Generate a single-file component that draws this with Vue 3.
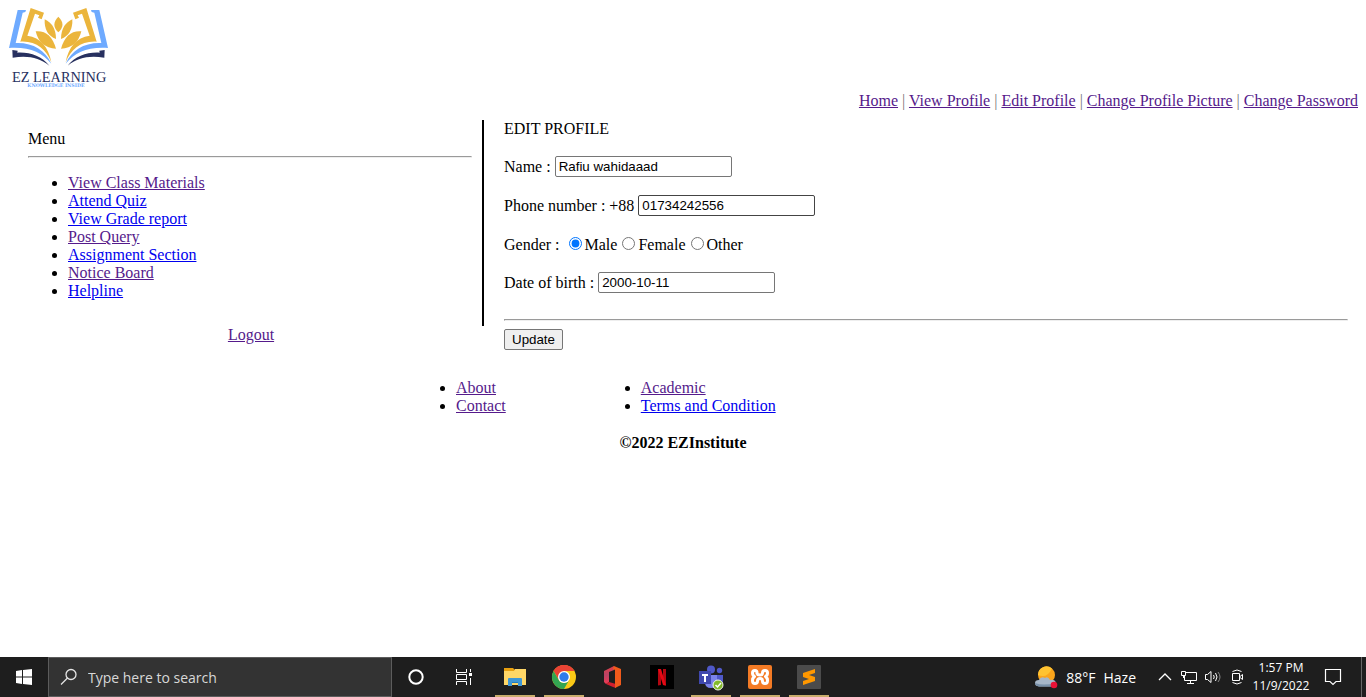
<script setup>
import { ref } from 'vue'

const topLinks = ['Home', 'View Profile', 'Edit Profile', 'Change Profile Picture', 'Change Password']
const menu = [
  { text: 'View Class Materials', seen: true },
  { text: 'Attend Quiz', seen: false },
  { text: 'View Grade report', seen: false },
  { text: 'Post Query', seen: true },
  { text: 'Assignment Section', seen: false },
  { text: 'Notice Board', seen: true },
  { text: 'Helpline', seen: false },
]
const name = ref('Rafiu wahidaaad')
const phone = ref('01734242556')
const gender = ref('Male')
const birth = ref('2000-10-11')
</script>

<template>
  <div class="screen">
    <div class="page">
      <header>
        <svg class="logo" viewBox="24 24 300 240" role="img" aria-label="EZ Learning, knowledge inside">
          <defs>
            <g id="book-half">
              <path fill="#6eaaff" d="M53 30H78L76 36L68 38L47 129C98 127 136 150 154 191C125 157 88 140 27 144Z" />
              <path fill="#27305f" d="M37 150L53 152L52 158C90 156 125 168 148 197C118 173 85 166 38 173Z" />
              <path fill="#ebb53c" d="M92 24L132 38L125 58L114 53L118 46L105 41L82 107C122 112 146 142 154 187C138 148 108 122 61 125Z" />
              <path fill="#ebb53c" d="M134 58Q168 74 168 117Q132 104 134 58Z" />
              <path fill="#ebb53c" d="M107 94Q152 90 168 146Q119 144 107 94Z" />
            </g>
          </defs>
          <use href="#book-half" />
          <use href="#book-half" transform="translate(351 0) scale(-1 1)" />
          <path fill="#ebb53c" d="M175 50Q200 74 175 97Q151 74 175 50Z" />
          <text class="logo-name" x="36" y="247">EZ LEARNING</text>
          <text class="logo-tag" x="82" y="261">KNOWLEDGE INSIDE</text>
        </svg>
        <nav class="top-nav">
          <template v-for="(link, i) in topLinks" :key="link">
            <span v-if="i" class="bar"> | </span><a href="#" class="seen">{{ link }}</a>
          </template>
        </nav>
      </header>

      <main class="columns">
        <aside>
          <nav class="menu">
            Menu
            <hr>
            <ul>
              <li v-for="item in menu" :key="item.text"><a href="#" :class="{ seen: item.seen }">{{ item.text }}</a></li>
            </ul>
          </nav>
          <div class="logout"><a href="#" class="seen">Logout</a></div>
        </aside>

        <form @submit.prevent>
          <div>EDIT PROFILE</div>
          <div class="field"><label for="name">Name :</label><input id="name" v-model="name" type="text"></div>
          <div class="field"><label for="phone">Phone number : +88</label><input id="phone" v-model="phone" class="dark" type="text"></div>
          <div class="genders" role="radiogroup" aria-label="Gender">Gender : <input id="male" v-model="gender" type="radio" value="Male"><label for="male">Male</label><input id="female" v-model="gender" type="radio" value="Female"><label for="female">Female</label><input id="other" v-model="gender" type="radio" value="Other"><label for="other">Other</label></div>
          <div class="field"><label for="birth">Date of birth :</label><input id="birth" v-model="birth" type="text"></div>
          <hr>
          <button class="update" type="submit">Update</button>
        </form>
      </main>

      <footer>
        <div class="foot-lists">
          <ul>
            <li><a href="#" class="seen">About</a></li>
            <li><a href="#" class="seen">Contact</a></li>
          </ul>
          <ul>
            <li><a href="#" class="seen">Academic</a></li>
            <li><a href="#">Terms and Condition</a></li>
          </ul>
        </div>
        <b class="copyright">©2022 EZInstitute</b>
      </footer>
    </div>

    <div class="taskbar">
      <button class="start" aria-label="Start">
        <svg viewBox="0 0 16 16" width="16" height="16" fill="#fff"><path d="M0 2L6 1V7.500H0ZM7 1L16 0V7.500H7ZM0 8.500H6V15L0 14ZM7 8.500H16V16L7 15Z" /></svg>
      </button>
      <label class="search">
        <svg viewBox="0 0 18 18" width="18" height="18" fill="none" stroke="#e6e6e6" stroke-width="1.300"><circle cx="11" cy="6.500" r="5" /><path d="M7.500 10L1 16.500" /></svg>
        <input type="text" placeholder="Type here to search" aria-label="Search">
      </label>
      <div class="apps">
        <button aria-label="Cortana">
          <svg viewBox="0 0 40 40"><circle cx="19" cy="20" r="6.700" fill="none" stroke="#fff" stroke-width="2" /></svg>
        </button>
        <button aria-label="Task view">
          <svg viewBox="0 0 40 40" fill="none" stroke="#fff"><path d="M10.500 12V15.500H20.500V12M10.500 28V24.500H20.500V28M10.500 17.500H20.500V22.500H10.500ZM24.500 12V15M24.500 21V28" /><path fill="#fff" stroke="none" d="M23 16H26V19H23Z" /></svg>
        </button>
        <button class="open" aria-label="File Explorer">
          <svg viewBox="0 0 40 40"><path fill="#e8a010" d="M9 11H18L20 13V17H9Z" /><path fill="#ffd767" d="M9 14H19L20 12H31V28H9Z" /><path fill="#3f97d5" d="M13 29V22Q13 21 14 21H26Q27 21 27 22V29H23V25H17V29Z" /><path fill="#247cba" d="M17 25H23V26H17Z" /></svg>
        </button>
        <button class="open" aria-label="Chrome">
          <svg viewBox="0 0 40 40"><circle cx="20" cy="20" r="12" fill="#fbc916" /><path fill="#e94335" d="M20 20L9.600 14A12 12 0 0 1 30.400 14H20Z" /><path fill="#e94335" d="M20 14H30.400A12 12 0 0 0 9.600 14L15 23Z" /><path fill="#33a552" d="M9.600 14A12 12 0 0 0 20 32L25.200 23A6 6 0 0 1 14.800 23Z" /><circle cx="20" cy="20" r="6" fill="#fff" /><circle cx="20" cy="20" r="4.700" fill="#2f7bea" /></svg>
        </button>
        <button aria-label="Office">
          <svg viewBox="0 0 40 40"><defs><linearGradient id="office-l" x2="0" y2="1"><stop stop-color="#e13d45" /><stop offset=".5" stop-color="#b84467" /><stop offset="1" stop-color="#f13952" /></linearGradient></defs><path fill="url(#office-l)" d="M11 14L21 9V13L16 15V25L13 27L11 25Z" /><path fill="#d31e2e" d="M13 27L16 25L23 27V31L20 30Z" /><path fill="#f05a1b" d="M21 9L28 12V28L22 31V13L20 12Z" /></svg>
        </button>
        <button aria-label="Netflix">
          <svg viewBox="0 0 40 40"><path fill="#000" d="M8 8H32V32H8Z" /><path fill="#b20610" d="M16 12H19V28L16 28.500ZM21 12H24V28.500L21 28Z" /><path fill="#e50914" d="M16 12H19L24 28.500L21 28Z" /></svg>
        </button>
        <button class="open" aria-label="Teams">
          <svg viewBox="0 0 40 40"><circle cx="20" cy="12.500" r="4" fill="#5059c9" /><circle cx="28.500" cy="13.500" r="2.700" fill="#5059c9" /><path fill="#505ac9" d="M24 18H32V24Q32 29 25 29Z" /><path fill="#7b83eb" d="M14 18H26V25Q26 31 20 31Q14 31 14 25Z" /><path fill="#4048ae" d="M8 14H20V27H8Z" /><path fill="#fff" d="M11 17H17V19H15V25H13V19H11Z" /><circle cx="27" cy="28" r="5" fill="#83b92b" stroke="#f3f8e9" /><path d="M24.500 28L26.500 30L30 26" fill="none" stroke="#fff" stroke-width="1.500" /></svg>
        </button>
        <button class="open" aria-label="XAMPP">
          <svg viewBox="0 0 40 40"><rect x="8" y="8" width="24" height="24" rx="2" fill="#f47b25" /><path fill="none" stroke="#fff" stroke-width="3" stroke-linejoin="round" stroke-linecap="round" d="M17 16.500V15.500Q17 13.500 15 13.500Q12.500 13.500 12.500 16Q12.500 18.500 14.500 19.500Q12.500 21 12.500 23.500Q12.500 26.500 15 26.500Q17.500 26.500 17.500 24Q17.500 21.500 20 21.500T22.500 24Q22.500 26.500 25 26.500T27.500 23.500Q27.500 21 25.500 19.500Q27.500 18.500 27.500 16Q27.500 13.500 25 13.500T22.500 16Q22.500 18 20 18T17 16.500" /></svg>
        </button>
        <button class="open" aria-label="Sublime Text">
          <svg viewBox="0 0 40 40"><rect x="8" y="8" width="24" height="24" rx="1" fill="#4b4b4b" /><path fill="#ff9800" d="M14 16L26 12V16L20 18L26 20V24L14 28V24L20 22L14 20Z" /></svg>
        </button>
      </div>
      <div class="tray">
        <button class="weather">
          <svg viewBox="0 0 24 24" width="24" height="24"><circle cx="12.500" cy="10" r="8.500" fill="#fba51b" /><path fill="#ffc331" d="M4 10A8.500 8.500 0 0 1 18 3.500Q13 14 4 10Z" /><path fill="#a7b7c8" d="M5 21.500Q1 21 1 18Q1 15 5 15Q7 11 11 13Q14 11 16 15Q21 14 22 18Q22 21.500 18 21.500Z" /><path fill="#7890a8" d="M1 18Q9 21 22 18Q22 21.500 18 21.500H5Q1 21 1 18Z" /><circle cx="20" cy="20" r="3.300" fill="#e81136" /></svg>
          <span>88°F</span><span>Haze</span>
        </button>
        <button class="mini" aria-label="Show hidden icons"><svg viewBox="0 0 16 16" fill="none" stroke="#fff" stroke-width="1.300"><path d="M2 11L8 5L14 11" /></svg></button>
        <button class="mini" aria-label="Network"><svg viewBox="0 0 16 16" fill="none" stroke="#fff"><path d="M5 3.500H15.500V11.500H3.500V7M9.500 12V14M6 14.500H13M.5 2.500H4.500V6.500H.5ZM2.500 7V9" /></svg></button>
        <button class="mini" aria-label="Volume"><svg viewBox="0 0 16 16" fill="none" stroke="#fff"><path d="M.5 5.500H2.500L6 2.500V13.500L2.500 10.500H.5ZM8.500 6Q10 8 8.500 10M10.500 4Q13.500 8 10.500 12" /><path stroke="#888" d="M13 3Q17 8 13 13" /></svg></button>
        <button class="mini" aria-label="Meet now"><svg viewBox="0 0 16 16" fill="none" stroke="#fff"><path d="M3.500 2.500Q8 -.5 12.500 2.500M3.500 13.500Q8 16.500 12.500 13.500M3.500 4.500H10.500V11.500H3.500ZM11 7.500L13.500 5.500V10.500L11 8.500" /></svg></button>
        <div class="clock"><time>1:57 PM</time><time>11/9/2022</time></div>
        <button class="notes" aria-label="Notifications"><svg viewBox="0 0 18 18" width="18" height="18" fill="none" stroke="#fff" stroke-width="1.200"><path d="M1.500 1.500H16.500V13.500H12L9 16.500L6 13.500H1.500Z" /></svg></button>
        <button class="desktop" aria-label="Show desktop"></button>
      </div>
    </div>
  </div>
</template>

<style>
body { margin: 0; background: #fff; }
</style>

<style scoped>
.screen { min-height: 100vh; display: flex; flex-direction: column; color: #000; font: 16px/18px "Liberation Serif", serif; }
.page { flex: 1; padding: 8px; }
a { color: #0000ee; }
a.seen { color: #551a8b; }
hr { margin: 8px 0; border: 1px solid; border-color: #9a9a9a #eee #eee #9a9a9a; }
ul { margin: 16px 0; padding-left: 40px; }
header { display: flex; flex-direction: column; }
.logo { width: 100px; height: 80px; display: block; }
.logo-name { font: 43px "Liberation Serif", serif; fill: #27305f; }
.logo-tag { font: bold 14px "DejaVu Serif", serif; fill: #6eaaff; }
.top-nav { margin-top: 4px; text-align: right; }
.bar { color: #777; }
.columns { display: grid; grid-template-columns: 476fr 874fr; margin-top: 10px; }
.menu { border-right: 2px solid #000; padding: 10px 10px 10px 20px; display: flow-root; }
.logout { text-align: center; padding: 0 10px 0 20px; }
form { padding: 0 10px 0 20px; }
.field { display: flex; align-items: center; gap: 4px; margin: 18px 0; }
.field input { box-sizing: border-box; width: 177px; height: 21px; padding: 1px 3px; border: 1px solid #767676; border-radius: 2px; background: #fff; color: #000; font-family: "Liberation Sans", sans-serif; }
.field input.dark { border-color: #444; }
.genders { height: 20px; line-height: 20px; }
.genders input { width: 13px; height: 13px; margin: 3px 3px 0 5px; }
form hr { margin-top: 26px; }
.update { display: block; height: 21px; padding: 0 7px; border: 1px solid #767676; border-radius: 2px; background: #efefef; color: #000; font-family: "Liberation Sans", sans-serif; }
.foot-lists { display: flex; gap: 95px; width: 534px; max-width: 100%; margin: 0 auto; padding-top: 13px; }
.copyright { display: block; text-align: center; padding-top: 3px; }

.taskbar { display: flex; height: 40px; background: #1e1e1e; color: #fff; font: 14px "Open Sans", "Noto Sans", sans-serif; }
.taskbar button { padding: 0; border: 0; background: none; color: inherit; font: inherit; }
.start { width: 48px; display: grid; place-items: center; }
.search { box-sizing: border-box; width: 344px; display: flex; align-items: center; gap: 10px; padding-left: 11px; border: 1px solid #5c5c5c; background: #333; }
.search input { flex: 1; min-width: 0; padding: 0; border: 0; background: none; color: #fff; font: inherit; outline: 0; }
.search input::placeholder { color: #d8d8d8; opacity: 1; }
.apps { display: flex; gap: 9px; margin-left: 5px; }
.apps button { box-sizing: border-box; width: 40px; height: 40px; }
.apps svg { display: block; width: 40px; height: 40px; }
.apps .open { box-shadow: inset 0 -2px #c9ad6c; }
.tray { margin-left: auto; display: flex; align-items: center; }
.taskbar .weather { display: flex; align-items: center; gap: 8px; margin-right: 21px; }
.mini { width: 16px; height: 16px; margin-right: 8px; }
.mini svg { display: block; width: 16px; height: 16px; }
.clock { width: 56px; display: flex; flex-direction: column; align-items: center; font-size: 12px; line-height: 18px; }
.notes { width: 48px; height: 18px; }
.taskbar .desktop { width: 5px; height: 40px; margin-left: 4px; border-left: 1px solid #666; }
</style>
